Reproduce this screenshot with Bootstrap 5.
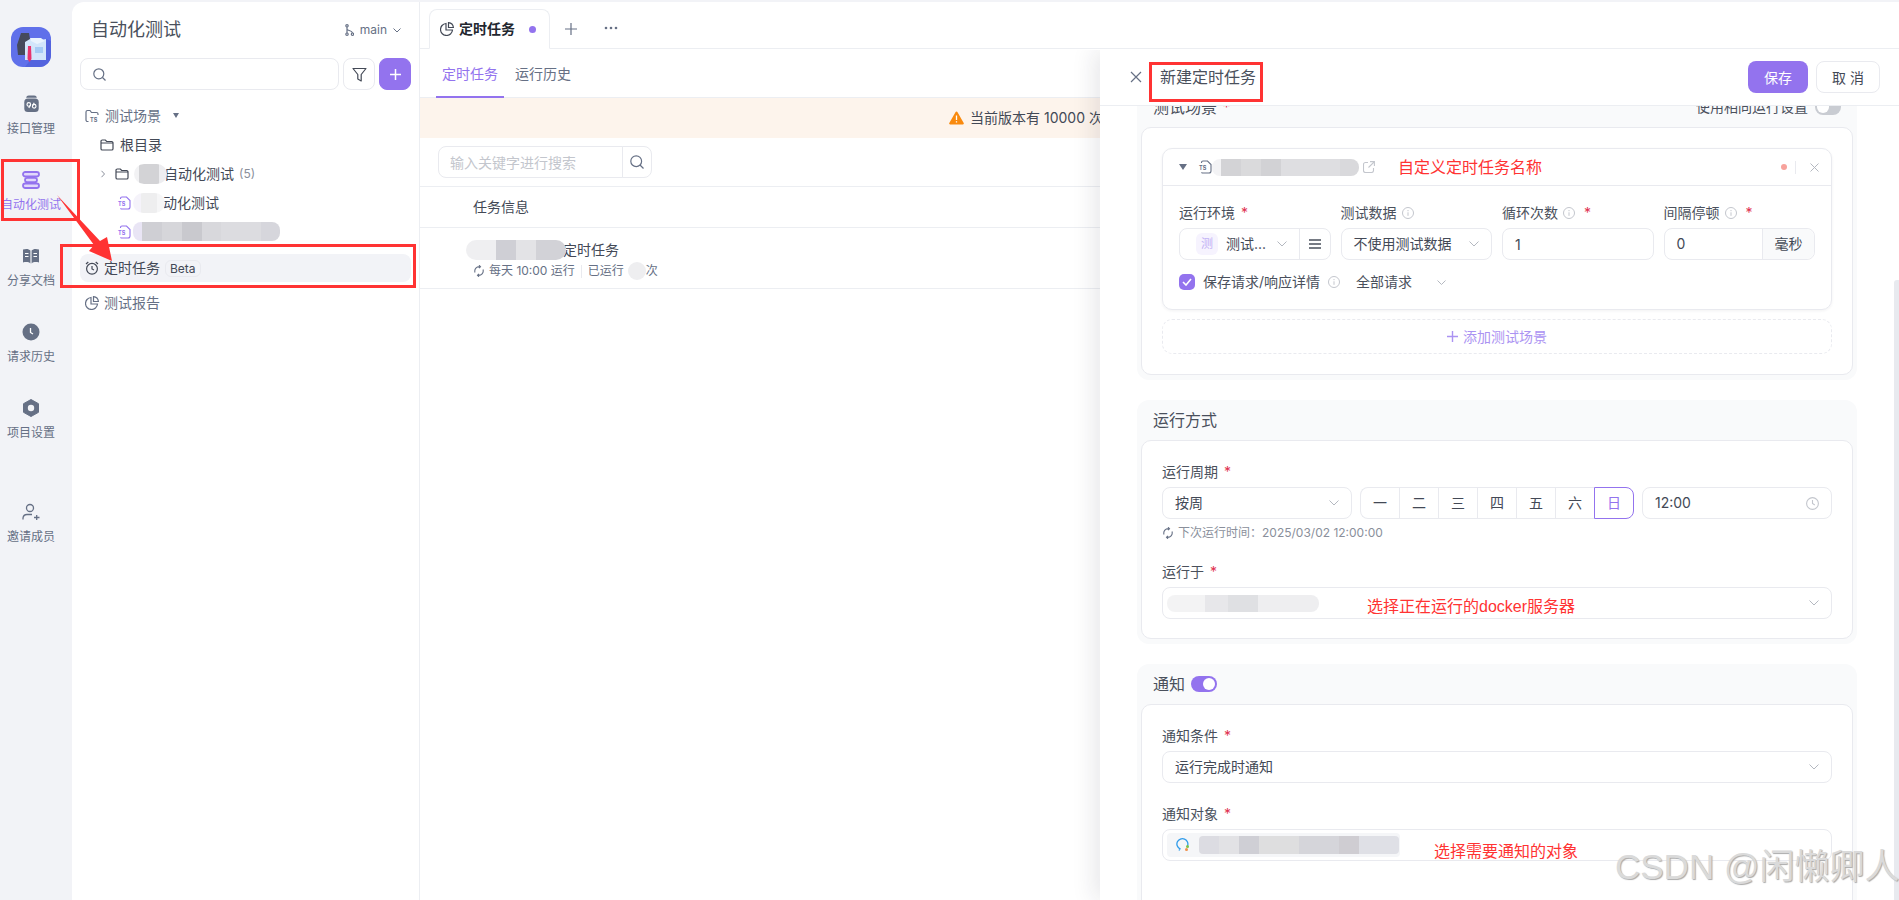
<!DOCTYPE html>
<html lang="zh-CN">
<head>
  <meta charset="UTF-8" />
  <title>定时任务</title>
  <link rel="stylesheet" href="https://cdn.jsdelivr.net/npm/bootstrap@5.3.3/dist/css/bootstrap.min.css">
  <style>
    html, body { height: 900px; overflow: hidden; }
    body {
      background: #f2f3f7;
      color: #434956;
      font-family: Inter, "Noto Sans CJK SC", sans-serif;
      font-size: 14px;
      line-height: 20px;
    }
    svg { display: block; flex: none; }
    .star { color: #e0314f; margin-left: 1px; }
    .app { width: 1899px; height: 900px; position: relative; }
    .ts-mark { font: 700 5.500px Inter, sans-serif; }

    /* left rail */
    .rail { width: 72px; flex: none; padding-top: 27px; }
    .rail-logo { width: 40px; height: 40px; margin-left: 11px; margin-bottom: 28px; }
    .rail-item { width: 62px; height: 76px; font-size: 12px; line-height: 16px; color: #667085; white-space: nowrap; gap: 8px; }
    .rail-item.on { color: #9373ee; }
    .rail-gap { height: 28px; }

    /* tree column */
    .side { width: 348px; flex: none; margin-top: 2px; background: #fff; border-top-left-radius: 12px; border-right: 1px solid #eceef2; padding: 0 8px; }
    .side-head { height: 56px; padding: 0 10px 0 11px; }
    .side-title { font-size: 18px; color: #4a505c; }
    .branch { font-size: 12px; color: #667085; gap: 6px; }
    .field-search { width: 259px; height: 32px; border: 1px solid #e9eaef; border-radius: 8px; padding-left: 12px; }
    .btn-square { width: 32px; height: 32px; padding: 0; border: 1px solid #e9eaef; border-radius: 8px; background: #fff; }
    .btn-square.fill { background: #9373ee; border-color: #9373ee; }
    .tools { gap: 4px; margin-bottom: 11px; }
    .tree-row { height: 29px; white-space: nowrap; gap: 5px; }
    .tree-l0 { padding-left: 5px; color: #667085; }
    .tree-l1 { padding-left: 20px; gap: 6px; }
    .tree-l2 { padding-left: 20px; }
    .tree-l3 { padding-left: 37px; gap: 2px; }
    .tree-count { color: #8a8f9b; font-size: 12px; }
    .tree-on { height: 28px; margin-top: 8px; background: #f2f3f7; border-radius: 8px; color: #434956; margin-bottom: 6px; }
    .pill-beta { font-size: 12px; line-height: 15px; padding: 0 4px; border: 1px solid #e9eaef; border-radius: 6px; }
    .caret-mini { width: 0; height: 0; border-left: 3.5px solid transparent; border-right: 3.5px solid transparent; border-top: 5px solid #667085; margin-left: 7px; }

    /* smudged names */
    .smudge { display: inline-block; position: relative; z-index: 1; flex: none; }
    .sm-a { width: 33px; height: 20px; border-radius: 10px; margin-right: -8px; background: linear-gradient(90deg, #f2f2f4 0 15%, #d3d3d6 15% 75%, #ededf0 75%); }
    .sm-b { width: 32px; height: 20px; border-radius: 10px; margin-right: -4px; background: linear-gradient(90deg, #f5f3fa 0 25%, #eeeeef 25% 75%, #f6f6f7 75%); }
    .sm-c { width: 147px; height: 19px; border-radius: 8px; background: linear-gradient(90deg, #e9e5f5 0 6%, #cfcfd4 6% 20%, #d6d6da 20% 33%, #c9c9ce 33% 47%, #d8d8dc 47% 60%, #dcdce0 60% 87%, #d6d6dc 87%); }
    .sm-d { width: 100px; height: 20px; border-radius: 10px; margin-right: -3px; background: linear-gradient(90deg, #efeff1 0 30%, #cfcfd5 30% 50%, #e3e3e6 50% 70%, #d2d2d7 70%); }
    .sm-e { width: 18px; height: 18px; border-radius: 9px; background: #eeeef0; margin-right: -4px; }
    .sm-f { width: 147px; height: 17px; border-radius: 8px; background: linear-gradient(90deg, #f3f3f5 0 6%, #d3d3d6 6% 20%, #dadadc 20% 33%, #d2d2d5 33% 47%, #dedee1 47% 87%, #d9d9dc 87%); }
    .sm-g { width: 152px; height: 17px; border-radius: 8px; margin-left: -8px; background: linear-gradient(90deg, #f3f3f4 0 25%, #e7e7ea 25% 40%, #dfe0e3 40% 60%, #eeeef0 60%); }
    .sm-h { width: 200px; height: 18px; border-radius: 4px; background: linear-gradient(90deg, #dcdce2 0 10%, #e2e2e5 10% 20%, #cfcfd5 20% 30%, #dededf 30% 50%, #d5d5da 50% 70%, #cfcdd2 70% 80%, #dfe0e6 80%); }

    /* main list */
    .main { flex: 1; min-width: 0; margin-top: 2px; background: #fff; }
    .tabbar { height: 47px; border-bottom: 1px solid #eceef2; padding-left: 9px; }
    .tab-page { width: 121px; height: 40px; margin-bottom: -1px; padding-left: 10px; background: #fff; border: 1px solid #eceef2; border-bottom-color: #fff; border-radius: 8px 8px 0 0; gap: 5px; color: #23272f; font-weight: 600; }
    .tab-dot { width: 7px; height: 7px; border-radius: 50%; background: #9373ee; margin-left: 9px; }
    .tab-add { margin-left: 15px; margin-right: 27px; margin-bottom: 13px; }
    .tab-more { margin-bottom: 11px; }
    .subtabs { height: 49px; padding-left: 16px; border-bottom: 1px solid #eceef2; gap: 4px; }
    .subtab { height: 49px; padding: 0 6px; line-height: 50px; color: #667085; margin-right: 1px; }
    .subtab.on { color: #9373ee; border-bottom: 2px solid #9373ee; }
    .notice { height: 40px; background: #fdf4ec; padding-left: 529px; gap: 6px; white-space: nowrap; }
    .finder { height: 49px; padding-left: 18px; border-bottom: 1px solid #eceef2; }
    .finder .input-group { width: 214px; }
    .finder .form-control { height: 32px; font-size: 14px; padding: 0 11px; border-color: #e9eaef; border-radius: 8px 0 0 8px; box-shadow: none; }
    .finder .form-control::placeholder { color: #c3c6cd; }
    .finder .btn { width: 30px; padding: 0; border: 1px solid #e9eaef; border-radius: 0 8px 8px 0; }
    .grid-head { height: 41px; padding-left: 53px; border-bottom: 1px solid #eceef2; }
    .grid-row { height: 61px; padding: 12px 0 0 46px; border-bottom: 1px solid #eceef2; }
    .grid-name { margin-bottom: 1px; line-height: 20px; }
    .grid-meta { padding-left: 7px; font-size: 12px; line-height: 20px; color: #667085; gap: 4px; white-space: nowrap; }
    .grid-sep { width: 1px; height: 13px; background: #e9eaef; margin: 0 2px; }

    /* drawer over the list */
    .drawer { position: absolute; left: 1100px; top: 50px; right: 0; bottom: 0; background: #fff; box-shadow: -6px 0 22px rgba(30, 34, 50, .1); clip-path: inset(0 0 0 -40px); }
    .drawer-head { height: 56px; border-bottom: 1px solid #eceef2; padding: 0 19px 1px 30px; position: relative; z-index: 2; background: #fff; }
    .drawer-title { font-size: 16px; margin-left: 18px; color: #4a505c; }
    .btn-save { width: 60px; height: 32px; padding: 0; font-size: 14px; color: #fff; background: #9373ee; border: 0; border-radius: 8px; }
    .btn-cancel { width: 64px; height: 32px; padding: 0; font-size: 14px; color: #434956; background: #fff; border: 1px solid #e9eaef; border-radius: 8px; margin-left: 8px; }
    .drawer-body { padding-left: 37px; }
    .zone { width: 720px; background: #f9fafb; border-radius: 12px; padding: 0 4px 5px; margin-bottom: 20px; }
    .zone-first { margin-top: -19px; }
    .zone-head { height: 40px; padding: 0 12px; font-size: 16px; color: #4a505c; }
    .zone-head-small { font-size: 14px; }
    .zone-card { background: #fff; border: 1px solid #e9eaef; border-radius: 10px; padding: 20px; }
    .zone-card-tall { padding-top: 21px; padding-bottom: 19px; }
    .zone-card-fill { padding-top: 21px; padding-bottom: 80px; }
    .scene { border: 1px solid #e9eaef; border-radius: 10px; box-shadow: 0 1px 3px rgba(30, 34, 50, .06); }
    .scene-head { height: 37px; border-bottom: 1px solid #e9eaef; padding: 0 12px 0 16px; position: relative; }
    .scene-caret { width: 0; height: 0; border-left: 4px solid transparent; border-right: 4px solid transparent; border-top: 6px solid #667085; margin-right: 11px; }
    .scene-dot { width: 6px; height: 6px; border-radius: 50%; background: #f7a29c; }
    .scene-x { margin-left: 12px; }
    .scene-body { padding: 17px 16px 17px; }
    .scene-grid { display: grid; grid-template-columns: repeat(4, 1fr); gap: 10px; }
    .label-line { height: 20px; margin-bottom: 5px; color: #4a505c; white-space: nowrap; gap: 5px; }
    .box { height: 32px; border: 1px solid #e9eaef; border-radius: 8px; padding: 0 12px; background: #fff; white-space: nowrap; position: relative; }
    .box-input { height: 32px; font-size: 14px; padding: 0 12px; border-color: #e9eaef; border-radius: 8px; color: #434956; box-shadow: none; }
    .env-tile { width: 22px; height: 22px; background: #f6f3fe; color: #c3b2f5; border-radius: 6px; font-size: 12px; margin-right: 8px; }
    .env-menu { width: 31px; height: 32px; border-left: 1px solid #e9eaef; }
    .env-left { padding-right: 12px; }
    .unit-cell { width: 52px; height: 30px; background: #f9fafb; border-left: 1px solid #e9eaef; border-radius: 0 8px 8px 0; }
    .save-row { height: 20px; margin-top: 12px; gap: 8px; color: #4a505c; white-space: nowrap; }
    .check-tile { width: 16px; height: 16px; border-radius: 5px; background: #9373ee; }
    .save-mode { width: 90px; margin-left: 8px; }
    .add-scene { height: 35px; margin-top: 9px; border: 1px dashed #e9eaef; border-radius: 10px; color: #ab93f2; gap: 5px; }
    .cycle { gap: 8px; }
    .cycle-select { width: 190px; }
    .cycle-days { width: 274px; height: 32px; }
    .day { flex: 1; border: 1px solid #e9eaef; border-right: 0; background: #fff; padding: 0; font-size: 14px; color: #434956; }
    .day:first-child { border-radius: 8px 0 0 8px; }
    .day.on { border: 1px solid #9373ee; color: #9373ee; border-radius: 0 8px 8px 0; }
    .next-run { height: 16px; margin-top: 6px; margin-bottom: 21px; font-size: 12px; line-height: 16px; color: #8a8f9b; gap: 4px; }
    .gap-block { margin-top: 21px; }
    .who-tag { width: 233px; height: 24px; margin-left: -8px; padding-left: 8px; background: #f5f6f8; border-radius: 4px; gap: 8px; }
    .ink-note { position: absolute; z-index: 3; color: #f33; font-size: 16px; line-height: 22px; font-family: "Liberation Sans", "Noto Sans CJK SC", sans-serif; white-space: nowrap; }
    .note-name { left: 235px; top: 8px; }
    .note-srv { left: 204px; top: 8px; }
    .note-who { left: 271px; top: 11px; }
    .swi { width: 26px; height: 16px; border-radius: 8px; position: relative; }
    .swi::after { content: ""; position: absolute; top: 2px; width: 12px; height: 12px; background: #fff; border-radius: 50%; }
    .swi-on { background: #9373ee; margin-left: 6px; }
    .swi-on::after { right: 2px; }
    .swi-off { background: #c9ccd2; margin-left: 7px; }
    .swi-off::after { left: 2px; }
    .scroll-thumb { position: absolute; right: 0; top: 230px; width: 5px; bottom: 0; background: #e8eaef; border-radius: 3px 0 0 0; z-index: 3; }
    .drawer-clip { height: 794px; overflow: hidden; }

    /* red marks laid over the whole shot */
    .mark-box { position: absolute; border: 3px solid #f33; z-index: 5; pointer-events: none; }
    .mark-rail { left: 1px; top: 159px; width: 79px; height: 62px; }
    .mark-job { left: 60px; top: 244px; width: 356px; height: 44px; }
    .mark-title { left: 1149px; top: 62px; width: 114px; height: 40px; }
    .mark-arrow { position: absolute; left: 50px; top: 190px; z-index: 6; }
    .stamp { position: absolute; left: 1615px; top: 847px; z-index: 7; font-family: "Liberation Sans", "Noto Sans CJK SC", sans-serif; font-size: 35px; line-height: 40px; color: #dadada; text-shadow: 1px 1px 1px #aaa; white-space: nowrap; }
  </style>
</head>
<body>
<div class="app d-flex">

  <nav class="rail">
    <svg class="rail-logo" width="40" height="40" viewBox="0 0 40 40">
      <rect width="40" height="40" rx="12" fill="#6070ea"/>
      <path d="M40 14v14a12 12 0 0 1-12 12H14L35 12z" fill="#5363de"/>
      <path d="M10 6h8l1 6v16h-12l-1-10z" fill="#454a5c"/>
      <path d="M14 15l5-3 6 2 10-2v21H14z" fill="#d3e6fb"/>
      <path d="M19 11h11l4 3-8 3-6-3z" fill="#eaf4fe"/>
      <rect x="24" y="20" width="8" height="6" fill="#a6cbf5"/>
      <path d="M17 19h3l.5 13-2 3-2-3z" fill="#e8336c"/>
    </svg>
    <div class="rail-item d-flex flex-column align-items-center">
      <svg width="17" height="18" viewBox="0 0 18 20"><rect x="1" y="4" width="16" height="15" rx="4" fill="#667085"/><path d="M3 3a3 3 0 0 1 3-2.500h6a3 3 0 0 1 3 2.500z" fill="#667085"/><circle cx="6" cy="10.500" r="2" fill="none" stroke="#fff" stroke-width="1.300"/><path d="M7.800 11l-1.800 3.500" stroke="#fff" stroke-width="1.300"/><circle cx="12" cy="12.500" r="2" fill="none" stroke="#fff" stroke-width="1.300"/><path d="M10.200 12l1.800-3.500" stroke="#fff" stroke-width="1.300"/></svg>
      <span>接口管理</span>
    </div>
    <div class="rail-item on d-flex flex-column align-items-center">
      <svg width="18" height="18" viewBox="0 0 18 18" fill="#e1d8fb" stroke="#9373ee" stroke-width="1.800"><rect x="1" y="1" width="16" height="4.500" rx="2.250"/><rect x="3" y="6.800" width="12" height="4.400" rx="2.200"/><rect x="1" y="12.500" width="16" height="4.500" rx="2.250"/></svg>
      <span>自动化测试</span>
    </div>
    <div class="rail-item d-flex flex-column align-items-center">
      <svg width="18" height="18" viewBox="0 0 18 18"><path d="M1 2.500c3-1 6-.7 7.400 1v13C7 15 4 14.700 1 15.500z" fill="#667085"/><path d="M17 2.500c-3-1-6-.7-7.400 1v13c1.400-1.500 4.400-1.800 7.400-1z" fill="#667085"/><path d="M3 6.500h3.500M3 9.500h3.500M11.500 6.500H15M11.500 9.500H15" stroke="#fff" stroke-width="1.100"/></svg>
      <span>分享文档</span>
    </div>
    <div class="rail-item d-flex flex-column align-items-center">
      <svg width="18" height="18" viewBox="0 0 18 18"><circle cx="9" cy="9" r="8.500" fill="#667085"/><path d="M8.500 5v4.500l2.500 1.500" fill="none" stroke="#fff" stroke-width="1.300"/></svg>
      <span>请求历史</span>
    </div>
    <div class="rail-item d-flex flex-column align-items-center">
      <svg width="18" height="18" viewBox="0 0 18 18"><path d="M9 .500l7.500 4.200v8.600L9 17.500l-7.500-4.200V4.700z" fill="#667085" stroke="#667085" stroke-linejoin="round"/><circle cx="9" cy="9" r="3.200" fill="#f2f3f7"/></svg>
      <span>项目设置</span>
    </div>
    <div class="rail-gap"></div>
    <div class="rail-item d-flex flex-column align-items-center">
      <svg width="18" height="18" viewBox="0 0 18 18" fill="none" stroke="#667085" stroke-width="1.300"><circle cx="8" cy="5" r="3.500"/><path d="M1 16.500v-1.500a4 4 0 0 1 4-3.500h5M12 14.500h5.500M14.700 12v5"/></svg>
      <span>邀请成员</span>
    </div>
  </nav>

  <aside class="side">
    <div class="side-head d-flex align-items-center justify-content-between">
      <span class="side-title">自动化测试</span>
      <span class="branch d-flex align-items-center">
        <svg width="9" height="12" viewBox="0 0 9 12" fill="none" stroke="#667085" stroke-width="1.200"><circle cx="2" cy="1.800" r="1.200"/><circle cx="2" cy="10.200" r="1.200"/><circle cx="7.500" cy="10.200" r="1.200"/><path d="M2 3v6M2 5c0 2 5 1 5.500 4"/></svg>
        <span>main</span>
        <svg width="8" height="5" viewBox="0 0 8 5" fill="none" stroke="#667085"><path d="M.500.500L4 4 7.500.500"/></svg>
      </span>
    </div>
    <div class="tools d-flex">
      <div class="field-search d-flex align-items-center">
        <svg width="13" height="13" viewBox="0 0 13 13" fill="none" stroke="#667085" stroke-width="1.200"><circle cx="5.800" cy="5.800" r="5"/><path d="M9.500 9.500L12.500 12.500"/></svg>
      </div>
      <button class="btn btn-square d-flex align-items-center justify-content-center" type="button">
        <svg width="15" height="15" viewBox="0 0 15 15" fill="none" stroke="#434956" stroke-width="1.200" stroke-linejoin="round"><path d="M1 1.500h13L9.200 7.500v6.500l-3.400-2V7.500z"/></svg>
      </button>
      <button class="btn btn-square fill d-flex align-items-center justify-content-center" type="button">
        <svg width="11" height="11" viewBox="0 0 11 11" stroke="#fff" stroke-width="1.500"><path d="M5.500 0v11M0 5.500h11"/></svg>
      </button>
    </div>
    <div class="tree-row tree-l0 d-flex align-items-center">
      <svg width="15" height="14" viewBox="0 0 15 14" fill="none" stroke="#667085" stroke-width="1.200"><path d="M3.500 12.500H2.500a1.500 1.500 0 0 1-1.500-1.500V3a1.500 1.500 0 0 1 1.500-1.500h2.500l1.500 2h5a1.500 1.500 0 0 1 1.500 1.500v1"/><text class="ts-mark" x="5" y="12.500" fill="#667085" stroke="none">TS</text></svg>
      <span>测试场景</span><span class="caret-mini"></span>
    </div>
    <div class="tree-row tree-l1 d-flex align-items-center">
      <svg width="14" height="12" viewBox="0 0 14 12" fill="none" stroke="#434956" stroke-width="1.200"><path d="M1 4V2.300A1.300 1.300 0 0 1 2.300 1h3l1.400 1.500h4.900A1.300 1.300 0 0 1 13 3.800V4M1 4h12v5.700A1.300 1.300 0 0 1 11.700 11H2.300A1.300 1.300 0 0 1 1 9.700z"/></svg>
      <span>根目录</span>
    </div>
    <div class="tree-row tree-l2 d-flex align-items-center">
      <svg class="me-1" width="6" height="8" viewBox="0 0 6 8" fill="none" stroke="#8a8f9b"><path d="M1.500.800L4.500 4 1.500 7.200"/></svg>
      <svg width="14" height="12" viewBox="0 0 14 12" fill="none" stroke="#434956" stroke-width="1.200"><path d="M1 4V2.300A1.300 1.300 0 0 1 2.300 1h3l1.400 1.500h4.900A1.300 1.300 0 0 1 13 3.800V4M1 4h12v5.700A1.300 1.300 0 0 1 11.700 11H2.300A1.300 1.300 0 0 1 1 9.700z"/></svg>
      <span class="smudge sm-a"></span><span>自动化测试</span><span class="tree-count">(5)</span>
    </div>
    <div class="tree-row tree-l3 d-flex align-items-center">
      <svg width="14" height="14" viewBox="0 0 14 14" fill="none" stroke="#9373ee" stroke-width="1.100"><path d="M3.500 3V2.500A1.500 1.500 0 0 1 5 1h4.500L13 4.500V11a2 2 0 0 1-2 2H5a2 2 0 0 1-1.500-.700"/><text class="ts-mark" x="1" y="9.500" fill="#9373ee" stroke="none">TS</text></svg>
      <span class="smudge sm-b"></span><span>动化测试</span>
    </div>
    <div class="tree-row tree-l3 d-flex align-items-center">
      <svg width="14" height="14" viewBox="0 0 14 14" fill="none" stroke="#9373ee" stroke-width="1.100"><path d="M3.500 3V2.500A1.500 1.500 0 0 1 5 1h4.500L13 4.500V11a2 2 0 0 1-2 2H5a2 2 0 0 1-1.500-.700"/><text class="ts-mark" x="1" y="9.500" fill="#9373ee" stroke="none">TS</text></svg>
      <span class="smudge sm-c"></span>
    </div>
    <div class="tree-row tree-on tree-l0 d-flex align-items-center">
      <svg width="14" height="14" viewBox="0 0 14 14" fill="none" stroke="#434956" stroke-width="1.200"><circle cx="7" cy="7.800" r="5.400"/><path d="M7 5v3l2 1M1 3l2.300-2M13 3L10.700 1"/></svg>
      <span>定时任务</span><span class="pill-beta">Beta</span>
    </div>
    <div class="tree-row tree-l0 d-flex align-items-center">
      <svg width="14" height="14" viewBox="0 0 14 14" fill="none" stroke="#667085" stroke-width="1.200"><path d="M6 1.500A6 6 0 1 0 12.500 8H6z"/><path d="M8.500 .600a5.500 5.500 0 0 1 4.900 4.900H8.500z"/></svg>
      <span>测试报告</span>
    </div>
  </aside>

  <main class="main">
    <div class="tabbar d-flex align-items-end">
      <div class="tab-page d-flex align-items-center">
        <svg width="14" height="14" viewBox="0 0 14 14" fill="none" stroke="#434956" stroke-width="1.200"><path d="M6 1.500A6 6 0 1 0 12.500 8H6z"/><path d="M8.500 .600a5.500 5.500 0 0 1 4.900 4.900H8.500z"/></svg>
        <span>定时任务</span><span class="tab-dot"></span>
      </div>
      <svg class="tab-add" width="12" height="12" viewBox="0 0 12 12" stroke="#667085" stroke-width="1.200"><path d="M6 0v12M0 6h12"/></svg>
      <svg class="tab-more" width="14" height="14" viewBox="0 0 14 14" fill="#667085"><circle cx="2" cy="5" r="1.300"/><circle cx="7" cy="5" r="1.300"/><circle cx="12" cy="5" r="1.300"/></svg>
    </div>
    <div class="subtabs d-flex">
      <div class="subtab on">定时任务</div>
      <div class="subtab">运行历史</div>
    </div>
    <div class="notice d-flex align-items-center">
      <svg width="15" height="14" viewBox="0 0 15 14"><path d="M7.500 .500a1 1 0 0 1 .9.500l6.300 11a1 1 0 0 1-.9 1.500H1.200a1 1 0 0 1-.9-1.500l6.300-11a1 1 0 0 1 .9-.500z" fill="#f98a0e"/><path d="M7.500 4.500v4.500M7.500 10.300v1.200" stroke="#fff" stroke-width="1.300"/></svg>
      <span>当前版本有 10000 次</span>
    </div>
    <div class="finder d-flex align-items-center">
      <div class="input-group">
        <input class="form-control" type="text" placeholder="输入关键字进行搜索">
        <button class="btn d-flex align-items-center justify-content-center" type="button">
          <svg width="14" height="14" viewBox="0 0 14 14" fill="none" stroke="#667085" stroke-width="1.200"><circle cx="6.200" cy="6.200" r="5.400"/><path d="M10 10l3.500 3.500"/></svg>
        </button>
      </div>
    </div>
    <div class="grid-head d-flex align-items-center">任务信息</div>
    <div class="grid-row">
      <div class="grid-name d-flex align-items-center">
        <span class="smudge sm-d"></span><span>定时任务</span>
      </div>
      <div class="grid-meta d-flex align-items-center">
        <svg width="12" height="12" viewBox="0 0 12 12" fill="none" stroke="#667085" stroke-width="1.100"><path d="M2 7.500A4.500 4.500 0 0 1 7 1.700M10 4.500A4.500 4.500 0 0 1 5 10.300M6 .200L7.500 1.700 6 3.200M6 8.800L4.500 10.300 6 11.800"/></svg>
        <span>每天 10:00 运行</span><span class="grid-sep"></span><span>已运行</span><span class="smudge sm-e"></span><span>次</span>
      </div>
    </div>
  </main>

  <section class="drawer">
    <div class="drawer-head d-flex align-items-center">
      <svg width="12" height="12" viewBox="0 0 12 12" stroke="#667085" stroke-width="1.200"><path d="M1 1l10 10M11 1L1 11"/></svg>
      <span class="drawer-title">新建定时任务</span>
      <button class="btn btn-save ms-auto" type="button">保存</button>
      <button class="btn btn-cancel" type="button">取 消</button>
    </div>
    <div class="drawer-clip">
    <div class="drawer-body">

      <div class="zone zone-first">
        <div class="zone-head d-flex align-items-center justify-content-between">
          <span>测试场景 <span class="star">*</span></span>
          <span class="zone-head-small d-flex align-items-center">使用相同运行设置<span class="swi swi-off"></span></span>
        </div>
        <div class="zone-card">
          <div class="scene">
            <div class="scene-head d-flex align-items-center">
              <span class="scene-caret"></span>
              <svg width="14" height="14" viewBox="0 0 14 14" fill="none" stroke="#667085" stroke-width="1.100"><path d="M3.500 3V2.500A1.500 1.500 0 0 1 5 1h4.500L13 4.500V11a2 2 0 0 1-2 2H5a2 2 0 0 1-1.500-.700"/><text class="ts-mark" x="1" y="9.500" fill="#667085" stroke="none">TS</text></svg>
              <span class="smudge sm-f"></span>
              <svg class="ms-1" width="12" height="12" viewBox="0 0 12 12" fill="none" stroke="#c3c6cd" stroke-width="1.100"><path d="M10.500 7v2.500a2 2 0 0 1-2 2h-6a2 2 0 0 1-2-2v-6a2 2 0 0 1 2-2H5M7 .600h4.400V5M11.200.800L5.500 6.500"/></svg>
              <span class="ink-note note-name">自定义定时任务名称</span>
              <span class="scene-dot ms-auto"></span>
              <span class="grid-sep ms-2"></span>
              <svg class="scene-x" width="9" height="9" viewBox="0 0 9 9" stroke="#b4b8c0"><path d="M.500.500l8 8M8.500.500l-8 8"/></svg>
            </div>
            <div class="scene-body">
              <div class="scene-grid">
                <div>
                  <div class="label-line d-flex align-items-center">运行环境<span class="star">*</span></div>
                  <div class="box d-flex align-items-center p-0">
                    <div class="env-left flex-grow-1 d-flex align-items-center ps-3">
                      <span class="env-tile d-flex align-items-center justify-content-center">测</span>
                      <span>测试...</span>
                      <svg class="ms-auto" width="10" height="6" viewBox="0 0 10 6" fill="none" stroke="#b4b8c0"><path d="M.500.500L5 5 9.500.500"/></svg>
                    </div>
                    <div class="env-menu d-flex align-items-center justify-content-center">
                      <svg width="12" height="10" viewBox="0 0 12 10" stroke="#4a505c" stroke-width="1.300"><path d="M0 1h12M0 5h12M0 9h12"/></svg>
                    </div>
                  </div>
                </div>
                <div>
                  <div class="label-line d-flex align-items-center">测试数据
                    <svg width="12" height="12" viewBox="0 0 12 12" fill="none" stroke="#c3c6cd"><circle cx="6" cy="6" r="5.500"/><path d="M6 5.300v3.500M6 3v1.200"/></svg>
                  </div>
                  <div class="box d-flex align-items-center justify-content-between">
                    <span>不使用测试数据</span>
                    <svg width="10" height="6" viewBox="0 0 10 6" fill="none" stroke="#b4b8c0"><path d="M.500.500L5 5 9.500.500"/></svg>
                  </div>
                </div>
                <div>
                  <div class="label-line d-flex align-items-center">循环次数
                    <svg width="12" height="12" viewBox="0 0 12 12" fill="none" stroke="#c3c6cd"><circle cx="6" cy="6" r="5.500"/><path d="M6 5.300v3.500M6 3v1.200"/></svg>
                    <span class="star ms-1">*</span>
                  </div>
                  <input class="form-control box-input" type="text" value="1">
                </div>
                <div>
                  <div class="label-line d-flex align-items-center">间隔停顿
                    <svg width="12" height="12" viewBox="0 0 12 12" fill="none" stroke="#c3c6cd"><circle cx="6" cy="6" r="5.500"/><path d="M6 5.300v3.500M6 3v1.200"/></svg>
                    <span class="star ms-1">*</span>
                  </div>
                  <div class="box d-flex align-items-center pe-0">
                    <span class="flex-grow-1">0</span>
                    <span class="unit-cell d-flex align-items-center justify-content-center">毫秒</span>
                  </div>
                </div>
              </div>
              <div class="save-row d-flex align-items-center">
                <span class="check-tile d-flex align-items-center justify-content-center">
                  <svg width="10" height="8" viewBox="0 0 10 8" fill="none" stroke="#fff" stroke-width="1.600"><path d="M1 4l3 3 5-6"/></svg>
                </span>
                <span>保存请求/响应详情</span>
                <svg width="12" height="12" viewBox="0 0 12 12" fill="none" stroke="#c3c6cd"><circle cx="6" cy="6" r="5.500"/><path d="M6 5.300v3.500M6 3v1.200"/></svg>
                <span class="save-mode d-flex align-items-center justify-content-between">
                  <span>全部请求</span>
                  <svg width="9" height="5" viewBox="0 0 9 5" fill="none" stroke="#b4b8c0"><path d="M.500.500L4.500 4.500 8.500.500"/></svg>
                </span>
              </div>
            </div>
          </div>
          <div class="add-scene d-flex align-items-center justify-content-center">
            <svg width="11" height="11" viewBox="0 0 11 11" stroke="#ab93f2" stroke-width="1.400"><path d="M5.500 0v11M0 5.500h11"/></svg>
            <span>添加测试场景</span>
          </div>
        </div>
      </div>

      <div class="zone">
        <div class="zone-head d-flex align-items-center">运行方式</div>
        <div class="zone-card zone-card-tall">
          <div class="label-line d-flex align-items-center">运行周期<span class="star">*</span></div>
          <div class="cycle d-flex">
            <div class="box cycle-select d-flex align-items-center justify-content-between">
              <span>按周</span>
              <svg width="10" height="6" viewBox="0 0 10 6" fill="none" stroke="#b4b8c0"><path d="M.500.500L5 5 9.500.500"/></svg>
            </div>
            <div class="cycle-days d-flex">
              <button class="day" type="button">一</button>
              <button class="day" type="button">二</button>
              <button class="day" type="button">三</button>
              <button class="day" type="button">四</button>
              <button class="day" type="button">五</button>
              <button class="day" type="button">六</button>
              <button class="day on" type="button">日</button>
            </div>
            <div class="box flex-grow-1 d-flex align-items-center justify-content-between">
              <span>12:00</span>
              <svg width="13" height="13" viewBox="0 0 13 13" fill="none" stroke="#c3c6cd" stroke-width="1.100"><circle cx="6.500" cy="6.500" r="5.900"/><path d="M6.500 3v3.500l2.300 1.500"/></svg>
            </div>
          </div>
          <div class="next-run d-flex align-items-center">
            <svg width="12" height="12" viewBox="0 0 12 12" fill="none" stroke="#667085" stroke-width="1.100"><path d="M2 7.500A4.500 4.500 0 0 1 7 1.700M10 4.500A4.500 4.500 0 0 1 5 10.300M6 .200L7.500 1.700 6 3.200M6 8.800L4.500 10.300 6 11.800"/></svg>
            <span>下次运行时间：2025/03/02 12:00:00</span>
          </div>
          <div class="label-line d-flex align-items-center">运行于<span class="star">*</span></div>
          <div class="box d-flex align-items-center justify-content-between">
            <span class="smudge sm-g"></span>
            <span class="ink-note note-srv">选择正在运行的docker服务器</span>
            <svg width="10" height="6" viewBox="0 0 10 6" fill="none" stroke="#b4b8c0"><path d="M.500.500L5 5 9.500.500"/></svg>
          </div>
        </div>
      </div>

      <div class="zone">
        <div class="zone-head d-flex align-items-center">通知<span class="swi swi-on"></span></div>
        <div class="zone-card zone-card-fill">
          <div class="label-line d-flex align-items-center">通知条件<span class="star">*</span></div>
          <div class="box d-flex align-items-center justify-content-between">
            <span>运行完成时通知</span>
            <svg width="10" height="6" viewBox="0 0 10 6" fill="none" stroke="#b4b8c0"><path d="M.500.500L5 5 9.500.500"/></svg>
          </div>
          <div class="label-line d-flex align-items-center gap-block">通知对象<span class="star">*</span></div>
          <div class="box d-flex align-items-center">
            <span class="who-tag d-flex align-items-center">
              <svg width="16" height="14" viewBox="0 0 16 14" fill="none"><path d="M4 12.500l1-1.700A5.500 5.300 0 1 1 12.500 8" stroke="#2f9bea" stroke-width="1.300"/><circle cx="12.500" cy="8.500" r="1.500" fill="#7cc24a"/><circle cx="11.500" cy="11.500" r="1.500" fill="#f0904a"/></svg>
              <span class="smudge sm-h"></span>
            </span>
            <span class="ink-note note-who">选择需要通知的对象</span>
          </div>
        </div>
      </div>
    </div>
    </div>
    <div class="scroll-thumb"></div>
  </section>

  <div class="mark-box mark-rail"></div>
  <div class="mark-box mark-job"></div>
  <div class="mark-box mark-title"></div>
  <svg class="mark-arrow" width="70" height="76" viewBox="0 0 70 76"><path d="M7 5L50 51 57 47 62 71 39 61 44 55z" fill="#f33"/></svg>
  <div class="stamp">CSDN @闲懒卿人</div>
</div>
<script src="https://cdn.jsdelivr.net/npm/bootstrap@5.3.3/dist/js/bootstrap.bundle.min.js"></script>
</body>
</html>
